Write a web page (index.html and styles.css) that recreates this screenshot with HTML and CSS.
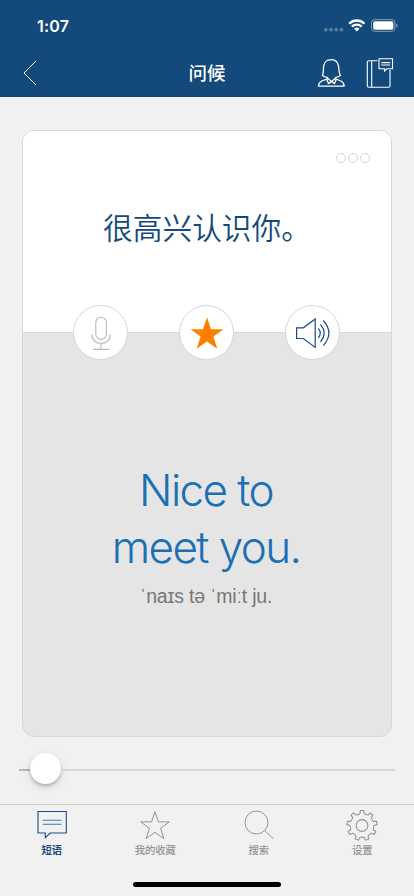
FILE: index.html
```html
<!DOCTYPE html>
<html lang="zh-CN">
<head>
<meta charset="utf-8">
<meta name="viewport" content="width=device-width, initial-scale=1">
<title>问候</title>
<link rel="stylesheet" href="styles.css">
</head>
<body>
<div class="app">
  <header class="header">
    <div class="status">
      <span class="time">1:07</span>
      <svg class="status-icons" width="76" height="16" viewBox="0 0 76 16" fill="#fff">
        <g opacity=".28"><circle cx="2.8" cy="11.7" r="1.9"/><circle cx="8" cy="11.7" r="1.9"/><circle cx="13.2" cy="11.7" r="1.9"/><circle cx="18.4" cy="11.7" r="1.9"/></g>
        <g fill="none" stroke="#fff" stroke-width="2.3"><path d="M26.2 5.6a10.9 10.9 0 0 1 15.2 0"/><path d="M28.9 8.6a7 7 0 0 1 9.8 0"/></g>
        <path d="M31.1 10.7a4 4 0 0 1 5.4 0l-2.7 2.7z"/>
        <rect x="48.5" y="1.6" width="23.5" height="11.8" rx="3.4" fill="none" stroke="#fff" stroke-opacity=".45"/>
        <rect x="50.2" y="3.2" width="20.2" height="8.6" rx="1.8"/>
        <path d="M73.3 5.4c1.6.7 1.6 3.6 0 4.3z" opacity=".5"/>
      </svg>
    </div>
    <nav class="nav">
      <svg class="back" width="14" height="26" viewBox="0 0 14 26" fill="none" stroke="#fff" stroke-width="1"><path d="M13 1 1 13l12 12"/></svg>
      <h1 class="title">问候</h1>
      <div class="nav-actions">
        <svg width="28" height="30" viewBox="0 0 28 30" fill="none" stroke="#fff" stroke-width="1.3" stroke-linejoin="round">
          <path d="M10.8 19.6C8.500 19.200 7 18.700 5.400 17.500C7 14.500 6 10.500 6.800 7.400 7.700 3.700 10.500 1.700 13.200 2c2.200-1 6.200 0 7.600 3.500 1.700 4.200.4 8.500 2.600 12-1.500 1.200-3.200 1.700-5.200 2.100"/>
          <path d="M10.800 19.600v1l-6 2.400c-2.100.9-3.200 2.300-3.400 5.100h25.800c-.2-2.800-1.300-4.200-3.400-5.100l-5.600-2.400v-1"/>
          <path d="M9.600 21.200 11.500 25.600l3-2 3 2 1.800-4.400M10.800 20.600l3.700 3 3.700-3"/>
        </svg>
        <svg width="28" height="30" viewBox="0 0 28 30" fill="none" stroke="#fff" stroke-width="1.1">
          <path d="M11.500 2.800H3Q1.300 2.800 1.300 4.500V27.800Q1.300 29.300 3 29.300H22.600Q24 29.300 24 27.700V12M5.700 2.800v26.500"/>
          <path d="M13 .8h13.500v10h-5.600l-2.400 2.400v-2.400H13zM15.400 4.600h8.800M15.400 7h8.800"/>
        </svg>
      </div>
    </nav>
  </header>

  <main class="content">
    <section class="card">
      <div class="front">
        <div class="dots"><i></i><i></i><i></i></div>
        <p class="phrase">很高兴认识你。</p>
      </div>
      <div class="back-side">
        <div class="actions">
          <span class="round"><svg width="54" height="54" viewBox="0 0 54 54" fill="none" stroke="#b9b9b9" stroke-width="1.1"><rect x="21.8" y="11.2" width="10.6" height="22.2" rx="5.3"/><path d="M17.9 28.6c0 11.8 18.4 11.8 18.4 0M27.1 37.5v5.8M19.2 43.4h15.8"/></svg></span>
          <span class="round"><svg width="54" height="54" viewBox="0 0 54 54" fill="#ff8000"><path d="M27 11.2l4 12h12.5l-10.1 7.4 3.900 12.2L27 35.4l-10.300 7.400 3.900-12.200-10.100-7.400h12.500z"/></svg></span>
          <span class="round"><svg width="54" height="54" viewBox="0 0 54 54" fill="none" stroke="#1b4c83" stroke-width="1.2"><path d="M10.6 21.8h6.7L29.2 13v28.400l-11.900-8.900h-6.700z"/><path d="M32.3 22.4q4 4.700 0 9.500M34.500 18.300q7.400 8.700 0 17.500M37.300 14.500q11.200 12.500 0 25.200"/></svg></span>
        </div>
        <div class="translation">
          <p class="english">Nice to<br>meet you.</p>
          <p class="phonetic">ˈnaɪs tə ˈmiːt ju.</p>
        </div>
      </div>
    </section>
    <div class="slider"><span class="played"></span><span class="knob"></span><span class="rest"></span></div>
  </main>

  <footer class="tabs">
    <a class="tab active">
      <svg width="32" height="32" viewBox="0 0 32 32" fill="none" stroke="currentColor" stroke-width="1.1"><path d="M2 2.5h28.300V24H14.200l-4.900 4.700V24H2z"/><path d="M6.700 11.300h18.800M6.700 15.300h18.800" stroke="#3a77b5"/></svg>
      <span>短语</span>
    </a>
    <a class="tab">
      <svg width="32" height="32" viewBox="0 0 32 32" fill="none" stroke="currentColor"><path d="M16 2.6l3.400 10.300h10.900l-8.800 6.400 3.400 10.400L16 23.300l-8.900 6.400 3.400-10.400-8.800-6.400h10.900z"/></svg>
      <span>我的收藏</span>
    </a>
    <a class="tab">
      <svg width="32" height="32" viewBox="0 0 32 32" fill="none" stroke="currentColor"><circle cx="13.5" cy="13.5" r="11.5"/><path d="M21.7 21.6l8.700 8.300"/></svg>
      <span>搜索</span>
    </a>
    <a class="tab">
      <svg width="32" height="32" viewBox="-16 -16.500 32 32" fill="none" stroke="currentColor" stroke-width="1.100">
        <path id="tooth" d="M-4.100-11.280Q-3.300-10.900-2.600-11.600L-2-12.200-1.700-15H1.700L2-12.200 2.600-11.600Q3.300-10.900 4.100-11.280"/>
        <use href="#tooth" transform="rotate(40)"/><use href="#tooth" transform="rotate(80)"/><use href="#tooth" transform="rotate(120)"/><use href="#tooth" transform="rotate(160)"/><use href="#tooth" transform="rotate(200)"/><use href="#tooth" transform="rotate(240)"/><use href="#tooth" transform="rotate(280)"/><use href="#tooth" transform="rotate(320)"/>
        <circle r="5.9"/>
      </svg>
      <span>设置</span>
    </a>
  </footer>
  <div class="home"></div>
</div>
</body>
</html>
```
FILE: styles.css
```css
* { box-sizing: border-box; }
body, p, h1 { margin: 0; }
body { background: #f1f1f1; font-family: Inter, "Noto Sans CJK SC", sans-serif; }
.app { width: 414px; height: 896px; display: flex; flex-direction: column; overflow: hidden; }

.header { height: 97px; flex: none; background: #134a7b; color: #fff; }
.status { height: 49px; padding: 18px 15px 0 37px; display: flex; justify-content: space-between; align-items: flex-start; }
.time { font-size: 16px; font-weight: 600; line-height: 16px; letter-spacing: .2px; }
.nav { height: 48px; padding: 0 20px 0 23px; display: grid; grid-template-columns: 1fr auto 1fr; align-items: center; }
.title { font-size: 18.5px; font-weight: 500; line-height: 24px; margin-left: -3px; }
.nav-actions { display: flex; justify-content: flex-end; gap: 21px; }

.content { flex: 1; display: flex; flex-direction: column; padding: 33px 19px 0; }
.card { width: 370px; height: 607px; flex: none; margin-left: 3px; border: 1px solid #d8d8d8; border-radius: 12px; background: #e5e5e5; display: flex; flex-direction: column; }
.front { height: 202px; flex: none; background: #fff; border-bottom: 1px solid #d8d8d8; border-radius: 11px 11px 0 0; }
.dots { display: flex; justify-content: flex-end; gap: 2px; padding: 22px 21px 0 0; }
.dots i { width: 10px; height: 10px; border: 1px solid #d4d4d4; border-radius: 50%; }
.phrase { margin-top: 36px; text-align: center; font-family: "Noto Sans CJK SC", sans-serif; font-size: 29.7px; font-weight: 350; line-height: 56px; color: #134a7b; }
.actions { display: flex; gap: 51px; padding-left: 50px; margin-top: -28px; }
.round { width: 55px; height: 55px; border: 1px solid #d6d6d6; border-radius: 50%; background: #fff; display: flex; align-items: center; justify-content: center; }
.round svg { flex: none; }
.translation { margin-top: 102px; text-align: center; }
.english { font-size: 44px; font-weight: 300; line-height: 57px; letter-spacing: -1.6px; margin-left: -2px; color: #1a70b5; }
.phonetic { font-family: "Liberation Sans", sans-serif; font-size: 19.5px; line-height: 24px; letter-spacing: -.2px; margin: 8px 0 0 -2px; color: #777; }

.slider { display: flex; align-items: center; height: 31px; flex: none; margin-top: 17px; }
.played { width: 11px; height: 2px; background: #b5b5b5; }
.knob { width: 31px; height: 31px; margin-top: -2px; border-radius: 50%; background: #fff; box-shadow: 0 2px 3px rgba(0,0,0,.2), 0 3px 8px rgba(0,0,0,.13); }
.rest { flex: 1; height: 2px; background: #d6d6d6; }

.tabs { height: 61px; flex: none; border-top: 1px solid #d0d0d0; display: grid; grid-template-columns: repeat(4, 1fr); padding-top: 4px; }
.tab { display: flex; flex-direction: column; align-items: center; color: #949494; font: 500 10.3px/16px "Noto Sans CJK SC", sans-serif; gap: 1px; }
.active { color: #1b4c83; font-weight: 700; }
.home { width: 148px; height: 5px; flex: none; margin: 17px auto 9px; border-radius: 3px; background: #000; }
```
